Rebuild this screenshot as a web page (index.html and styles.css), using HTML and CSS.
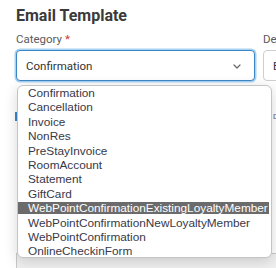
FILE: index.html
```html
<!DOCTYPE html>
<html>
<head>
<meta charset="utf-8">
<link rel="stylesheet" href="styles.css">
</head>
<body>
<div class="page">
  <h1 class="title">Email Template</h1>
  <div class="row">
    <div class="field">
      <label class="label">Category <span class="req">*</span></label>
      <div class="select focused">
        <span class="value">Confirmation</span>
        <svg class="chev" width="8" height="5" viewBox="0 0 8 5"><path d="M1 1 L4 4 L7 1" fill="none" stroke="#666" stroke-width="1.2" stroke-linecap="round" stroke-linejoin="round"/></svg>
      </div>
    </div>
    <div class="field">
      <label class="label">Description</label>
      <div class="select">
        <span class="value">Email</span>
      </div>
    </div>
  </div>
  <div class="row second">
    <div class="ghost-input"></div>
    <div class="ghost-right">ɒ</div>
  </div>
  <div class="bottom-box"></div>

  <ul class="popup">
    <li>Confirmation</li>
    <li>Cancellation</li>
    <li>Invoice</li>
    <li>NonRes</li>
    <li>PreStayInvoice</li>
    <li>RoomAccount</li>
    <li>Statement</li>
    <li>GiftCard</li>
    <li class="active">WebPointConfirmationExistingLoyaltyMember</li>
    <li>WebPointConfirmationNewLoyaltyMember</li>
    <li>WebPointConfirmation</li>
    <li>OnlineCheckinForm</li>
  </ul>
</div>
</body>
</html>
```
FILE: styles.css
```css
html, body {
  margin: 0;
  padding: 0;
  background: #fff;
  overflow: hidden;
}
.page {
  position: relative;
  width: 276px;
  height: 268px;
  overflow: hidden;
  font-family: Roboto, "Liberation Sans", sans-serif;
}
.title {
  margin: 0;
  padding: 6px 0 0 16px;
  font-size: 16px;
  line-height: 20px;
  font-weight: 700;
  color: #3a3a3a;
}
.row {
  display: grid;
  grid-template-columns: 239px 240px;
  column-gap: 8px;
  padding-left: 16px;
  margin-top: 6px;
}
.label {
  display: block;
  font-size: 11.5px;
  line-height: 14px;
  color: #5b5b5b;
  margin-bottom: 4px;
  white-space: nowrap;
}
.req {
  color: #d2342c;
}
.select {
  box-sizing: border-box;
  height: 31px;
  border: 1px solid #cfcfcf;
  border-radius: 4px;
  display: flex;
  align-items: center;
  justify-content: space-between;
  padding: 0 13px 0 9px;
  background: #fff;
}
.select.focused {
  border-color: #3a87c8;
  box-shadow: 0 0 0 1.5px #a8d1f2;
}
.value {
  font-size: 11.5px;
  color: #333;
}
.chev {
  display: block;
  margin-top: 1px;
}
.row.second {
  margin-top: 31px;
  grid-template-columns: 2px 1fr;
  padding-left: 15px;
  height: 9px;
  column-gap: 0;
}
.ghost-input {
  background: #3a87c8;
  height: 9px;
}
.ghost-right {
  justify-self: end;
  font-size: 9px;
  line-height: 9px;
  color: #777;
  margin-right: -2px;
}
.bottom-box {
  margin: 132px 0 0 16px;
  height: 20px;
  border: 1px solid #c9c9c9;
  border-right: 0;
  background: #efefef;
}
.popup {
  position: absolute;
  left: 17px;
  top: 85px;
  width: 255px;
  box-sizing: border-box;
  margin: 0;
  padding: 1px 0 0;
  list-style: none;
  background: #fff;
  border: 1px solid #c4c4c4;
  border-radius: 6px;
  box-shadow: 0 3px 14px rgba(0, 0, 0, 0.16);
  font-family: "Liberation Sans", Arial, sans-serif;
  font-size: 11.8px;
}
.popup li {
  height: 12px;
  line-height: 12px;
  margin: 0 2px 2.4px 0;
  padding-left: 10px;
  color: #383848;
  white-space: nowrap;
}
.popup li:last-child {
  margin-bottom: 0;
}
.popup li.active {
  background: #6b6b6b;
  color: #fff;
}
```
